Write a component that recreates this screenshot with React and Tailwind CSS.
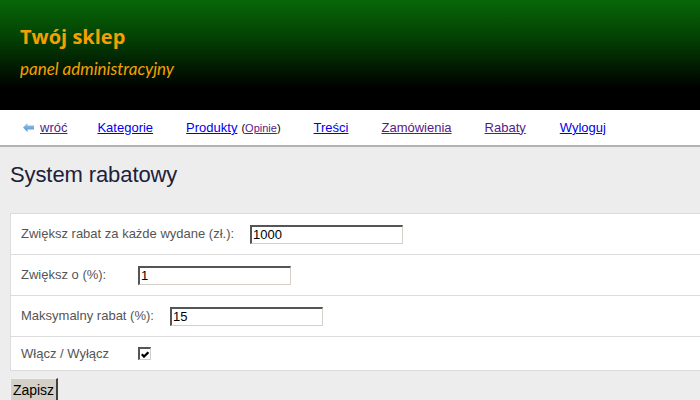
import React from "react";

function Input({ value, w = "w-[153px]" }) {
  return (
    <div
      className={`${w} h-[19px] bg-white border-t-2 border-l-2 border-r border-b border-t-[#555555] border-l-[#555555] border-r-[#d4d0c8] border-b-[#d4d0c8] flex items-center pl-[1px] text-[13px] text-black leading-none`}
      style={{ fontFamily: '"Liberation Sans", Arial, sans-serif' }}
    >
      {value}
    </div>
  );
}

export default function App() {
  const sans = { fontFamily: '"Liberation Sans", Arial, sans-serif' };
  return (
    <div className="w-[700px] h-[400px] overflow-hidden bg-[#ededed]" style={sans}>
      {/* header */}
      <div className="h-[110px] bg-[linear-gradient(to_bottom,#086808_0%,#034003_35%,#000000_80%)] pl-[20px] pt-[24px]">
        <div className="text-[20px] font-bold text-[#f5a000] leading-[26px]" style={{ fontFamily: '"Open Sans", Lato, sans-serif' }}>Twój sklep</div>
        <div className="text-[17px] italic text-[#f5a000] leading-[22px] mt-[8px]" style={{ fontFamily: 'Lato, "Open Sans", sans-serif' }}>panel administracyjny</div>
      </div>
      {/* nav */}
      <div className="h-[37px] bg-white border-b-2 border-[#b3b3b3] flex items-center pl-[23px] text-[13px]">
        <div className="flex items-center">
          <svg width="11" height="9" viewBox="0 0 11 9" className="mr-[6px]">
            <defs>
              <linearGradient id="ag" x1="0" y1="0" x2="0" y2="1">
                <stop offset="0" stopColor="#9fcbee" />
                <stop offset="1" stopColor="#4a8fcf" />
              </linearGradient>
            </defs>
            <polygon points="0,4.5 4.5,0 4.5,2.5 11,2.5 11,6.5 4.5,6.5 4.5,9" fill="url(#ag)" />
          </svg>
          <a href="#" className="underline text-[#551a8b]">wróć</a>
        </div>
        <a href="#" className="underline text-[#0000ee] ml-[30px]">Kategorie</a>
        <span className="ml-[33px] flex items-baseline">
          <a href="#" className="underline text-[#0000ee]">Produkty</a>
          <span className="text-[11px] text-black ml-[4px]">(<a href="#" className="underline text-[#551a8b]">Opinie</a>)</span>
        </span>
        <a href="#" className="underline text-[#0000ee] ml-[33px]">Treści</a>
        <a href="#" className="underline text-[#551a8b] ml-[33px]">Zamówienia</a>
        <a href="#" className="underline text-[#551a8b] ml-[33px]">Rabaty</a>
        <a href="#" className="underline text-[#0000ee] ml-[34px]">Wyloguj</a>
      </div>
      {/* main */}
      <div className="pl-[10px] pt-[15px]">
        <h1 className="text-[22px] leading-[26px] text-[#20203a] tracking-[-0.1px]">System rabatowy</h1>
        <div className="mt-[25px] w-[720px] bg-white border border-[#dcdcdc] text-[13px] text-[#555555]">
          <div className="h-[41px] border-b border-[#dcdcdc] flex items-center pl-[10px]">
            <span className="w-[229px]">Zwiększ rabat za każde wydane (zł.):</span>
            <Input value="1000" />
          </div>
          <div className="h-[41px] border-b border-[#dcdcdc] flex items-center pl-[10px]">
            <span className="w-[117px]">Zwiększ o (%):</span>
            <Input value="1" />
          </div>
          <div className="h-[41px] border-b border-[#dcdcdc] flex items-center pl-[10px]">
            <span className="w-[149px]">Maksymalny rabat (%):</span>
            <Input value="15" />
          </div>
          <div className="h-[33px] flex items-center pl-[10px]">
            <span className="w-[117px]">Włącz / Wyłącz</span>
            <div className="w-[13px] h-[13px] bg-white border-t-2 border-l-2 border-r border-b border-t-[#555555] border-l-[#555555] border-r-[#d4d0c8] border-b-[#d4d0c8] flex items-center justify-center">
              <svg width="8" height="7" viewBox="0 0 8 7">
                <path d="M0.8 3.2 L3 5.6 L7.4 1.2" stroke="#000" strokeWidth="2.2" fill="none" />
              </svg>
            </div>
          </div>
        </div>
        <button className="mt-[7px] h-[24px] w-[48px] bg-[#d4d0c8] border-t border-l border-r-2 border-b-2 border-t-[#f0f0f0] border-l-[#f0f0f0] border-r-[#404040] border-b-[#404040] text-[14px] text-black leading-none">
          Zapisz
        </button>
      </div>
    </div>
  );
}
